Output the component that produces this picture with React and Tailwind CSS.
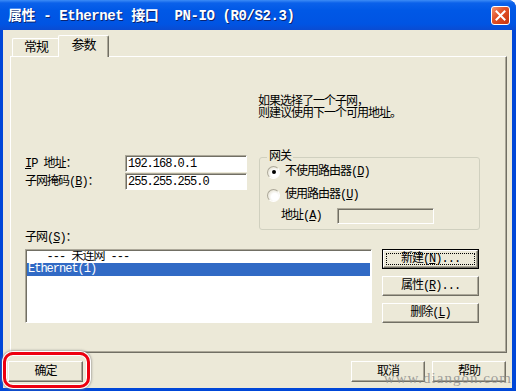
import React from 'react';

// classic 3D button edges on the XP beige face
const raised =
  'bg-[#ece9d8] border border-t-white border-l-white border-r-[#716f64] border-b-[#716f64] shadow-[inset_-1px_-1px_0_#aca899]';
const sunken =
  'border border-t-[#aca899] border-l-[#aca899] border-r-white border-b-white shadow-[inset_1px_1px_0_#716f64]';

const Key = ({ children }) => <span className="underline underline-offset-[1px]">{children}</span>;

const Button = ({ className = '', children }) => (
  <div className={`flex items-center justify-center ${raised} ${className}`}>{children}</div>
);

const Radio = ({ checked }) => (
  <div className="w-[13px] h-[13px] rounded-full flex items-center justify-center border border-[#aca899] border-b-white border-r-white bg-[radial-gradient(circle_at_62%_62%,#ffffff_35%,#ebe8dc_70%,#c6c3b5_100%)]">
    {checked && <div className="w-[4px] h-[4px] rounded-full bg-black" />}
  </div>
);

const TitleBar = () => (
  <div className="h-[30px] flex items-center pl-[8px] pr-[6px] bg-[linear-gradient(to_bottom,#3d8cf6_0%,#0b61ea_10%,#0058e6_35%,#0054e3_80%,#0a4bd2_100%)]">
    <div className="flex-1 pt-[2px] text-white font-bold text-[14px] tracking-[-0.4px] whitespace-pre [text-shadow:1px_1px_0_#0b2470]">
      {'属性 - Ethernet 接口  PN-IO (R0/S2.3)'}
    </div>
    <div className="w-[19px] h-[19px] mt-px rounded-[3px] border border-white flex items-center justify-center bg-[linear-gradient(135deg,#f3946e_0%,#e2532a_40%,#c9340c_100%)]">
      <svg width="11" height="11" viewBox="0 0 11 11">
        <path d="M1.5 1.5 L9.5 9.5 M9.5 1.5 L1.5 9.5" stroke="white" strokeWidth="2" strokeLinecap="square" />
      </svg>
    </div>
  </div>
);

export default function App() {
  return (
    <div className="w-[516px] h-[391px] flex flex-col bg-[#0047d8] rounded-tr-[8px] overflow-hidden text-[12px] tracking-[-1px] text-black font-['Liberation_Mono','Noto_Sans_CJK_SC',monospace]">
      <TitleBar />
      <div className="relative flex-1 ml-[3px] mr-[4px] mb-[3px] bg-[#ece9d8] flex flex-col pl-[7px] pr-[5px]">
        {/* tabs */}
        <div className="relative z-10 flex items-end h-[22px] mt-[5px] -mb-px pl-[2px]">
          <div className="w-[47px] h-[18px] mb-px flex items-center justify-center text-[13px] rounded-tl-[2px] border-t border-l border-white">
            常规
          </div>
          <div className="w-[51px] h-[22px] -ml-px pb-[2px] flex items-center justify-center text-[13px] bg-[#ece9d8] rounded-t-[2px] border-t border-l border-r border-t-white border-l-white border-r-[#716f64] shadow-[inset_-1px_0_0_#aca899]">
            参数
          </div>
        </div>

        {/* panel */}
        <div className="h-[297px] flex flex-col pl-[14px] pt-[39px] border border-t-white border-l-white border-r-[#716f64] border-b-[#716f64] shadow-[inset_-1px_-1px_0_#aca899]">
          <div className="ml-[233px] leading-[12px]">
            <div>如果选择了一个子网，</div>
            <div>则建议使用下一个可用地址。</div>
          </div>

          <div className="flex items-start mt-[30px]">
            <div className="mt-[5px] grid grid-cols-[100px_122px] gap-y-px">
              <div className="h-[17px] flex items-center whitespace-pre">
                <Key>I</Key>P 地址：
              </div>
              <div className={`h-[17px] bg-white flex items-center pl-[2px] ${sunken}`}>192.168.0.1</div>
              <div className="h-[17px] flex items-center">
                子网掩码(<Key>B</Key>)：
              </div>
              <div className={`h-[17px] bg-white flex items-center pl-[2px] ${sunken}`}>255.255.255.0</div>
            </div>

            <fieldset className="ml-[12px] w-[221px] h-[80px] border border-[#d0d0bf] rounded-[3px] px-0 pb-[5px]">
              <legend className="ml-[7px] px-[2px] leading-[14px]">网关</legend>
              <div className="h-[16px] flex items-center gap-[5px] pl-[7px]">
                <Radio checked />
                <span>
                  不使用路由器(<Key>D</Key>)
                </span>
              </div>
              <div className="h-[16px] mt-[7px] flex items-center gap-[5px] pl-[7px]">
                <Radio />
                <span>
                  使用路由器(<Key>U</Key>)
                </span>
              </div>
              <div className="h-[16px] mt-[5px] flex items-center pl-[21px]">
                <span className="w-[56px]">
                  地址(<Key>A</Key>)
                </span>
                <div className={`w-[97px] h-[16px] bg-[#ece9d8] ${sunken}`} />
              </div>
            </fieldset>
          </div>

          <div className="h-[14px] mt-px flex items-center">
            子网(<Key>S</Key>)：
          </div>

          <div className="flex items-start mt-[4px]">
            <div className={`w-[347px] h-[74px] bg-white p-px ${sunken}`}>
              <div className="h-[12px] leading-[12px] pl-px whitespace-pre overflow-hidden">{'   --- 未连网 ---'}</div>
              <div className="h-[13px] leading-[13px] pl-px bg-[#316ac5] text-white">Ethernet(1)</div>
            </div>
            <div className="ml-[10px] w-[97px] flex flex-col gap-[7px]">
              <div className="h-[20px] border border-black flex">
                <div className={`flex-1 flex p-[2px] ${raised}`}>
                  <div className="flex-1 flex items-center justify-center border border-dotted border-black">
                    新建(<Key>N</Key>)...
                  </div>
                </div>
              </div>
              <Button className="h-[20px]">
                属性(<Key>R</Key>)...
              </Button>
              <Button className="h-[20px]">
                删除(<Key>L</Key>)
              </Button>
            </div>
          </div>
        </div>

        {/* dialog buttons */}
        <div className="flex items-center mt-[8px] -ml-[2px] mr-px">
          <Button className="w-[75px] h-[21px]">确定</Button>
          <div className="flex-1" />
          <Button className="w-[74px] h-[21px]">取消</Button>
          <Button className="w-[74px] h-[21px] ml-[7px]">帮助</Button>
        </div>

        {/* red annotation round the OK button */}
        <div className="absolute left-0 top-[322px] w-[87px] h-[36px] rounded-[10px] border-[3px] border-[#ee0010] shadow-[inset_0_0_0_1px_#ffffff,0_0_0_1px_#ffffff,0_0_2px_2px_rgba(120,120,120,0.5)]" />

        {/* watermark */}
        <div className="absolute right-0 bottom-[2px] text-[15px] tracking-[1px] leading-[15px] text-[#8a8a8a]/80 font-['Liberation_Serif',serif]">
          www.diangon.com
        </div>
      </div>
    </div>
  );
}
